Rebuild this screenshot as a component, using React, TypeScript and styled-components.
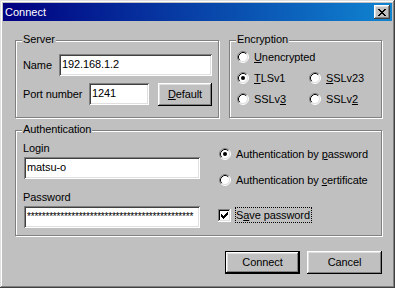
import React from "react";
import styled, { createGlobalStyle, css } from "styled-components";

const FACE = "#c0c0c0";

const GlobalStyle = createGlobalStyle`
  html, body { margin: 0; padding: 0; background: ${FACE}; }
  body { font-family: "Liberation Sans", Arial, sans-serif; font-size: 11px; }
  * { box-sizing: border-box; }
`;

const Window = styled.div`
  width: 395px;
  height: 288px;
  background: ${FACE};
  padding: 3px;
  display: flex;
  flex-direction: column;
  box-shadow: inset -1px -1px 0 #404040, inset 1px 1px 0 #dfdfdf,
    inset -2px -2px 0 #808080, inset 2px 2px 0 #fff;
  font-family: "Liberation Sans", Arial, sans-serif;
  font-size: 11px;
  letter-spacing: -0.1px;
  color: #000;
`;

const TitleBar = styled.div`
  height: 18px;
  display: flex;
  align-items: center;
  padding: 0 2px;
  background: linear-gradient(to right, #000080, #1084d0);
  color: #fff;
`;

const TitleText = styled.span`
  font-size: 11px;
  line-height: 13px;
  letter-spacing: 0;
`;

const CloseButton = styled.div`
  margin-left: auto;
  width: 16px;
  height: 14px;
  background: ${FACE};
  display: flex;
  align-items: center;
  justify-content: center;
  box-shadow: inset -1px -1px 0 #404040, inset 1px 1px 0 #fff,
    inset -2px -2px 0 #808080, inset 2px 2px 0 #dfdfdf;
`;

const Content = styled.div`
  padding: 19px 0 0 12px;
  display: flex;
  flex-direction: column;
  width: 379px;
`;

const TopRow = styled.div`
  display: flex;
  gap: 10px;
`;

const Group = styled.div<{ $w: number; $h: number; $mt?: number }>`
  position: relative;
  width: ${(p) => p.$w}px;
  height: ${(p) => p.$h}px;
  margin-top: ${(p) => p.$mt ?? 0}px;
  border: 1px solid #808080;
  box-shadow: 1px 1px 0 #fff, inset 1px 1px 0 #fff;
`;

const GroupLabel = styled.span`
  position: absolute;
  top: -8px;
  left: 6px;
  padding: 0 1px;
  line-height: 13px;
  background: ${FACE};
`;

const ServerBody = styled.div`
  display: flex;
  flex-direction: column;
  gap: 7px;
  padding: 13px 0 0 7px;
`;

const FieldRow = styled.div`
  display: flex;
  align-items: flex-start;
`;

const FieldLabel = styled.span<{ $w: number }>`
  width: ${(p) => p.$w}px;
  line-height: 13px;
  height: 22px;
  display: flex;
  align-items: center;
  white-space: nowrap;
`;

const Edit = styled.div<{ $w: number }>`
  width: ${(p) => p.$w}px;
  height: 22px;
  background: #fff;
  padding: 0 3px 1px 3px;
  display: flex;
  align-items: center;
  line-height: 13px;
  white-space: nowrap;
  overflow: hidden;
  box-shadow: inset 1px 1px 0 #808080, inset -1px -1px 0 #fff,
    inset 2px 2px 0 #404040, inset -2px -2px 0 #dfdfdf;
`;

const PushButton = styled.div<{ $w: number; $default?: boolean; $ml?: number }>`
  width: ${(p) => p.$w}px;
  height: 23px;
  margin-left: ${(p) => p.$ml ?? 0}px;
  background: ${FACE};
  display: flex;
  align-items: center;
  justify-content: center;
  line-height: 13px;
  box-shadow: inset -1px -1px 0 #000, inset 1px 1px 0 #fff,
    inset -2px -2px 0 #808080, inset 2px 2px 0 #dfdfdf;
  ${(p) =>
    p.$default &&
    css`
      border: 1px solid #000;
    `}
`;

const EncGrid = styled.div`
  display: grid;
  grid-template-columns: 72px 1fr;
  row-gap: 7px;
  padding: 9px 0 0 7px;
`;

const OptionRow = styled.div<{ $span?: boolean }>`
  display: flex;
  align-items: center;
  height: 14px;
  gap: 5px;
  white-space: nowrap;
  ${(p) => p.$span && css`grid-column: 1 / -1;`}
`;

const AuthBody = styled.div`
  display: flex;
  gap: 18px;
`;

const AuthLeft = styled.div`
  display: flex;
  flex-direction: column;
  padding: 11px 0 0 7px;
`;

const StackLabel = styled.span<{ $mt?: number }>`
  line-height: 13px;
  height: 13px;
  margin-top: ${(p) => p.$mt ?? 0}px;
  margin-bottom: 2px;
`;

const StackEdit = styled(Edit)`
  margin-left: 1px;
`;

const AuthRight = styled.div`
  display: flex;
  flex-direction: column;
  padding-top: 16px;
`;

const RadioOption = styled(OptionRow)<{ $mt?: number }>`
  margin-top: ${(p) => p.$mt ?? 0}px;
  padding-left: 1px;
`;

const CheckOption = styled.div<{ $mt?: number }>`
  display: flex;
  align-items: center;
  height: 14px;
  gap: 5px;
  margin-top: ${(p) => p.$mt ?? 0}px;
  white-space: nowrap;
`;

const FocusLabel = styled.span`
  line-height: 13px;
  height: 14px;
  display: flex;
  align-items: center;
  padding-right: 1px;
  outline: 1px dotted #000;
`;

const ButtonRow = styled.div`
  display: flex;
  justify-content: flex-end;
  gap: 7px;
  margin-top: 15px;
  width: 367px;
`;

const Asterisks = styled.span`
  letter-spacing: -0.2px;
  font-size: 10px;
`;

const Radio = ({ checked }: { checked?: boolean }) => (
  <svg width="12" height="12" viewBox="0 0 12 12" style={{ flex: "none" }}>
    <circle cx="6" cy="6" r="5" fill="#fff" />
    <path d="M2.11 9.89 A5.5 5.5 0 0 1 9.89 2.11" fill="none" stroke="#808080" strokeWidth="1" />
    <path d="M9.89 2.11 A5.5 5.5 0 0 1 2.11 9.89" fill="none" stroke="#fff" strokeWidth="1" />
    <path d="M2.82 9.18 A4.5 4.5 0 0 1 9.18 2.82" fill="none" stroke="#000" strokeWidth="1" />
    <path d="M9.18 2.82 A4.5 4.5 0 0 1 2.82 9.18" fill="none" stroke="#dfdfdf" strokeWidth="1" />
    {checked && <circle cx="6" cy="6" r="2" fill="#000" />}
  </svg>
);

const Checkbox = ({ checked }: { checked?: boolean }) => (
  <svg width="13" height="13" viewBox="0 0 13 13" shapeRendering="crispEdges" style={{ flex: "none" }}>
    <rect x="0" y="0" width="13" height="13" fill="#fff" />
    <path d="M0 0h12v1H1v11H0z" fill="#808080" />
    <path d="M1 1h10v1H2v9H1z" fill="#000" />
    <path d="M12 0h1v13H0v-1h12z" fill="#fff" />
    <path d="M11 1h1v11H1v-1h10z" fill="#dfdfdf" />
    {checked && (
      <path
        d="M9 3h1v1H9zM8 4h2v1H8zM3 5h1v1H3zM7 5h3v1H7zM3 6h2v1H3zM6 6h3v1H6zM3 7h5v1H3zM4 8h3v1H4zM5 9h1v1H5z"
        fill="#000"
      />
    )}
  </svg>
);

const CloseGlyph = () => (
  <svg width="8" height="7" viewBox="0 0 8 7" shapeRendering="crispEdges">
    <path
      d="M0 0h2v1H0zM6 0h2v1H6zM1 1h2v1H1zM5 1h2v1H5zM2 2h4v1H2zM3 3h2v1H3zM2 4h4v1H2zM1 5h2v1H1zM5 5h2v1H5zM0 6h2v1H0zM6 6h2v1H6z"
      fill="#000"
    />
  </svg>
);

export default function App() {
  return (
    <>
      <GlobalStyle />
      <Window>
        <TitleBar>
          <TitleText>Connect</TitleText>
          <CloseButton>
            <CloseGlyph />
          </CloseButton>
        </TitleBar>
        <Content>
          <TopRow>
            <Group $w={204} $h={78}>
              <GroupLabel>Server</GroupLabel>
              <ServerBody>
                <FieldRow>
                  <FieldLabel $w={36}>Name</FieldLabel>
                  <Edit $w={153}>192.168.1.2</Edit>
                </FieldRow>
                <FieldRow>
                  <FieldLabel $w={66}>Port number</FieldLabel>
                  <Edit $w={60}>1241</Edit>
                  <PushButton $w={54} $ml={9}>
                    <span>
                      <u>D</u>efault
                    </span>
                  </PushButton>
                </FieldRow>
              </ServerBody>
            </Group>
            <Group $w={153} $h={78}>
              <GroupLabel>Encryption</GroupLabel>
              <EncGrid>
                <OptionRow $span>
                  <Radio />
                  <span>
                    <u>U</u>nencrypted
                  </span>
                </OptionRow>
                <OptionRow>
                  <Radio checked />
                  <span>
                    <u>T</u>LSv1
                  </span>
                </OptionRow>
                <OptionRow>
                  <Radio />
                  <span>
                    <u>S</u>SLv23
                  </span>
                </OptionRow>
                <OptionRow>
                  <Radio />
                  <span>
                    SSLv<u>3</u>
                  </span>
                </OptionRow>
                <OptionRow>
                  <Radio />
                  <span>
                    SSLv<u>2</u>
                  </span>
                </OptionRow>
              </EncGrid>
            </Group>
          </TopRow>
          <Group $w={367} $h={106} $mt={12}>
            <GroupLabel>Authentication</GroupLabel>
            <AuthBody>
              <AuthLeft>
                <StackLabel>Login</StackLabel>
                <StackEdit $w={176}>matsu-o</StackEdit>
                <StackLabel $mt={12}>Password</StackLabel>
                <StackEdit $w={176}>
                  <Asterisks>{"*".repeat(45)}</Asterisks>
                </StackEdit>
              </AuthLeft>
              <AuthRight>
                <RadioOption>
                  <Radio checked />
                  <span>
                    Authentication by <u>p</u>assword
                  </span>
                </RadioOption>
                <RadioOption $mt={12}>
                  <Radio />
                  <span>
                    Authentication by <u>c</u>ertificate
                  </span>
                </RadioOption>
                <CheckOption $mt={21}>
                  <Checkbox checked />
                  <FocusLabel>
                    <span>
                      S<u>a</u>ve password
                    </span>
                  </FocusLabel>
                </CheckOption>
              </AuthRight>
            </AuthBody>
          </Group>
          <ButtonRow>
            <PushButton $w={75} $default>
              Connect
            </PushButton>
            <PushButton $w={75}>Cancel</PushButton>
          </ButtonRow>
        </Content>
      </Window>
    </>
  );
}
